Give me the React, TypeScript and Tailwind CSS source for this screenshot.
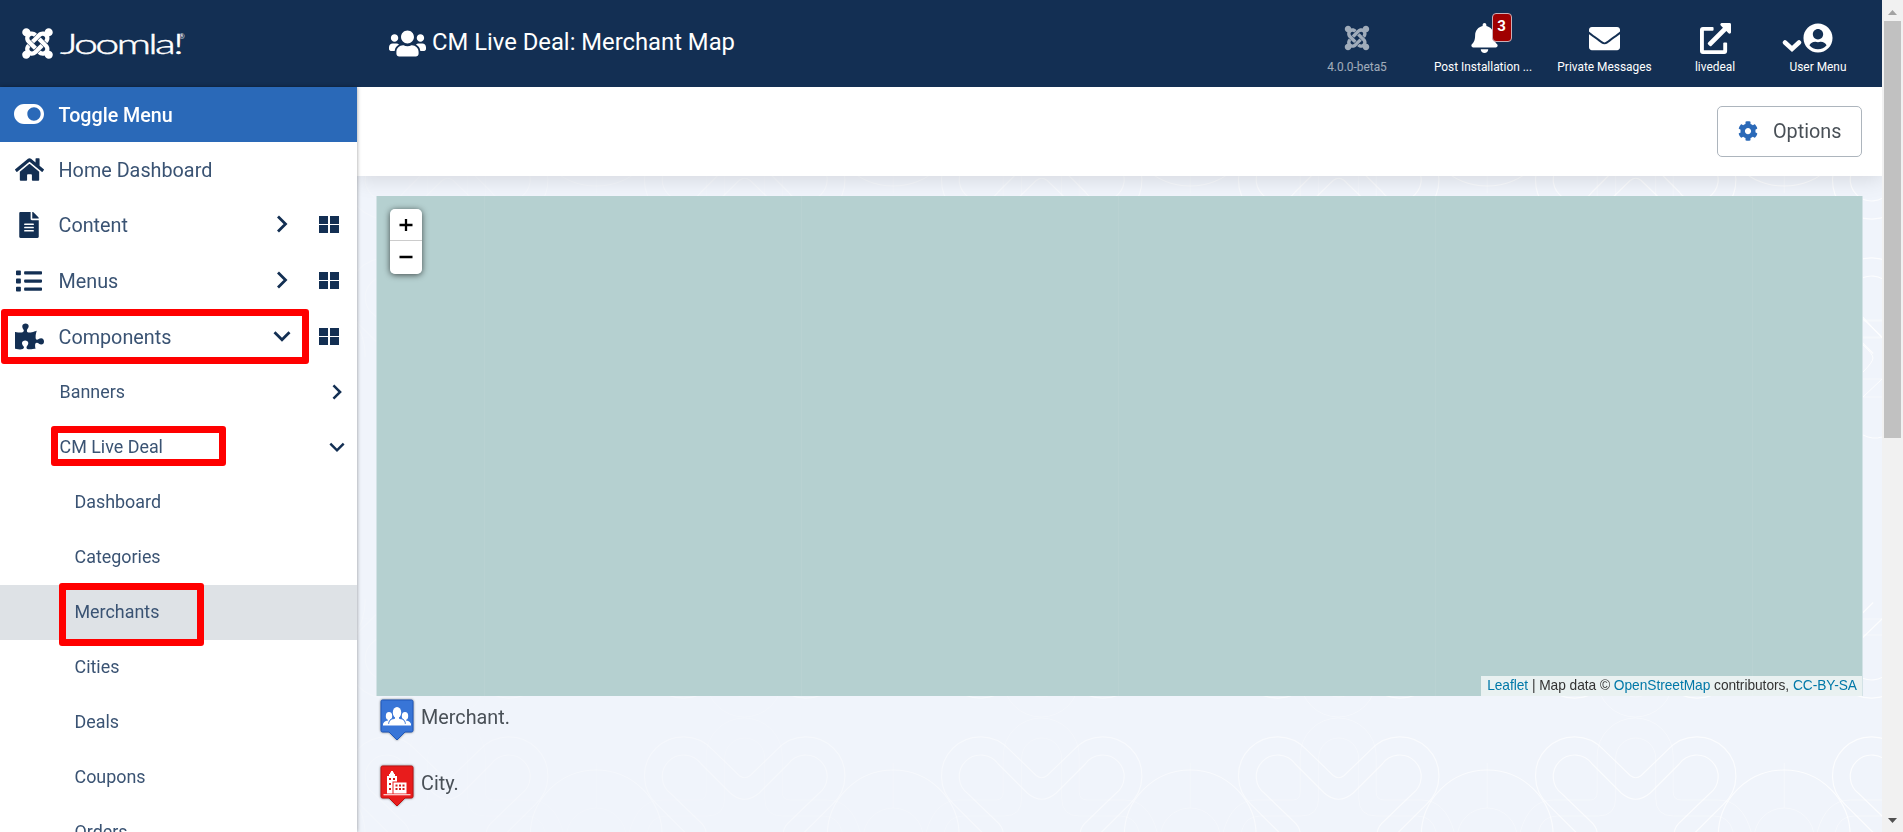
import type { ReactNode } from 'react';
import {
  FaBell, FaCog, FaEnvelope, FaExternalLinkAlt, FaFileAlt, FaHome, FaJoomla, FaList,
  FaPuzzlePiece, FaToggleOn, FaUserCircle, FaUsers,
} from 'react-icons/fa';

function Chevron({ down = false, className = 'h-[18px] w-[18px]' }: { down?: boolean; className?: string }) {
  return (
    <svg viewBox="0 0 18 18" className={className} fill="none" stroke="currentColor" strokeWidth="2.8">
      <path d={down ? 'M1.5 5.2 9 12.700l7.500-7.500' : 'M5 1.500 12.500 9 5 16.500'} />
    </svg>
  );
}

function Tiles() {
  return (
    <span className="grid h-[17px] w-5 grid-cols-2 gap-x-[2px] gap-y-[1px]">
      <span className="bg-[#132f53]" />
      <span className="bg-[#132f53]" />
      <span className="bg-[#132f53]" />
      <span className="bg-[#132f53]" />
    </span>
  );
}

function MainItem({ icon, label, arrow, tall = true }: { icon: ReactNode; label: string; arrow?: 'right' | 'down'; tall?: boolean }) {
  return (
    <li className={`flex items-center text-[#132f53] ${tall ? 'h-14' : 'h-[55px]'}`}>
      <span className="flex w-[58px] justify-center pb-px">{icon}</span>
      <span className="grow pl-[0.5px] pt-[2px] text-[19.8px] text-[#3a5373]">{label}</span>
      {arrow && (
        <>
          <span className="pb-[2px]"><Chevron down={arrow === 'down'} /></span>
          <span className="ml-[28px] mr-[18px] pb-[2px]"><Tiles /></span>
        </>
      )}
    </li>
  );
}

function SubItem({ label, arrow, deep, active }: { label: string; arrow?: 'right' | 'down'; deep?: boolean; active?: boolean }) {
  return (
    <li className={`flex h-[55px] shrink-0 items-center pr-3 text-[17.9px] text-[#3a5373] ${deep ? 'pl-[74.5px]' : 'pl-[59.5px]'} ${active ? 'bg-[#dee2e6]' : ''}`}>
      <span className="grow">{label}</span>
      {arrow && <span className="pb-[2px] text-[#132f53]"><Chevron down={arrow === 'down'} className="h-4 w-4" /></span>}
    </li>
  );
}

function Sidebar() {
  return (
    <aside className="relative z-10 h-[745px] w-[357px] shrink-0 overflow-hidden bg-white shadow-[0_0_4px_rgba(0,0,0,0.4)]">
      <div className="flex h-[55px] items-center bg-[#2a69b8] text-white">
        <span className="flex w-[58px] justify-center pb-px"><FaToggleOn className="h-[30px] w-[30px]" /></span>
        <span className="pl-[0.5px] pt-[2px] text-[19.7px] font-medium">Toggle Menu</span>
      </div>
      <ul>
        <MainItem icon={<FaHome className="h-[29px] w-[29px]" />} label="Home Dashboard" tall={false} />
        <MainItem icon={<FaFileAlt className="h-[26px] w-[20px]" />} label="Content" arrow="right" />
        <MainItem icon={<FaList className="h-[26px] w-[26px]" />} label="Menus" arrow="right" />
        <MainItem icon={<FaPuzzlePiece className="h-[29px] w-[29px]" />} label="Components" arrow="down" />
        <SubItem label="Banners" arrow="right" />
        <SubItem label="CM Live Deal" arrow="down" />
        <SubItem label="Dashboard" deep />
        <SubItem label="Categories" deep />
        <SubItem label="Merchants" deep active />
        <SubItem label="Cities" deep />
        <SubItem label="Deals" deep />
        <SubItem label="Coupons" deep />
        <SubItem label="Orders" deep />
      </ul>
    </aside>
  );
}

function HeaderItem({ icon, label, className }: { icon: ReactNode; label: string; className: string }) {
  return (
    <div className={`flex flex-col items-center ${className}`}>
      <span className="flex h-[36px] items-center justify-center">{icon}</span>
      <span className="mt-[2px] whitespace-nowrap text-[11.9px] leading-[18px]">{label}</span>
    </div>
  );
}

function Header() {
  return (
    <header className="flex h-[87px] bg-[#132f53] text-white">
      <div className="flex w-[389px] shrink-0 items-center pl-[20px]">
        <FaJoomla className="h-[35px] w-[35px]" />
        <svg className="ml-[4px] h-[40px] w-[130px]" viewBox="0 0 130 40">
          <text x="1" y="29.500" textLength="121" lengthAdjust="spacingAndGlyphs" letterSpacing="-1.8" fill="white" stroke="white" strokeWidth="0.4" fontSize="27" fontWeight="300" fontFamily="Lato, sans-serif">Joomla!</text>
          <text x="120" y="15" fill="white" fontSize="7" fontFamily="Lato, sans-serif">®</text>
        </svg>
      </div>
      <h1 className="flex h-[84px] grow items-center text-[23.8px]">
        <FaUsers className="mr-[6px] mt-[3px] h-[37px] w-[37px]" />
        <span className="pt-[2px]">CM Live Deal: Merchant Map</span>
      </h1>
      <div className="flex pt-[20px]">
        <HeaderItem className="w-[108px] opacity-60" icon={<FaJoomla className="mt-[-1px] h-[28px] w-[28px]" />} label="4.0.0-beta5" />
        <HeaderItem
          className="w-[142px] pl-[2px]"
          icon={
            <span className="relative left-[1px]">
              <FaBell className="h-[30px] w-[27px]" />
              <span className="absolute -top-[10px] left-[21px] flex h-[29px] w-5 items-center justify-center rounded border border-[#c9b0b8] bg-[#a00000] pb-[2px] text-[15px] font-bold">3</span>
            </span>
          }
          label="Post Installation ..."
        />
        <HeaderItem className="w-[103px]" icon={<FaEnvelope className="h-[31px] w-[31px]" />} label="Private Messages" />
        <HeaderItem className="w-[118px]" icon={<FaExternalLinkAlt className="h-[31px] w-[31px]" />} label="livedeal" />
        <HeaderItem
          className="w-[88px]"
          icon={
            <span className="relative">
              <svg viewBox="0 0 20 14" className="absolute -left-[21px] top-[16px] h-[14px] w-5" fill="none" stroke="white" strokeWidth="4.500" strokeLinecap="round">
                <path d="m3 3.500 7 6.500 7-6.500" />
              </svg>
              <FaUserCircle className="h-[30px] w-[30px]" />
            </span>
          }
          label="User Menu"
        />
        <div className="w-[20px]" />
      </div>
    </header>
  );
}

const COLUMNS = [-4, -3, -2, -1, 0, 1];
const BANDS = ['translate(0 738)', 'translate(0 697) scale(1 -1)', 'translate(0 259)', 'translate(0 218) scale(1 -1)'];

/** Faint line art behind the content area. */
function Backdrop() {
  return (
    <svg viewBox="357 87 1525 745" className="absolute inset-0 h-full w-full" fill="none" stroke="white">
      <defs>
        <linearGradient id="fade" x1="0" x2="1" y1="0" y2="0">
          <stop offset="0" stopColor="white" stopOpacity="0.25" />
          <stop offset="1" stopColor="white" stopOpacity="1" />
        </linearGradient>
        <mask id="fade-mask" maskUnits="userSpaceOnUse" x="357" y="87" width="1525" height="745">
          <rect x="357" y="87" width="1525" height="745" fill="url(#fade)" stroke="none" />
        </mask>
        <g id="motif">
          <g opacity="0.8" strokeWidth="1.200">
            <path d="M89 94.500 61 66.600A39 39 0 1 1 116 11.400L143 37.500Q148.500 42 154 37.500L181 11.400A39 39 0 1 1 236 66.600L208 94.500" />
            <path d="M110 94.500Q109 88 103 83L75 56A21.500 21.500 0 1 1 105 26L134 55Q148.500 67.500 163 55L192 26A21.500 21.500 0 1 1 222 56L194 83Q188 88 187 94.500" />
            <path d="M-66 98a66 66 0 0 1 132 0" />
          </g>
          <g opacity="0.4">
            <path d="M0 25v45M-30 100a30 30 0 0 1 60 0" />
            <path d="M33 94Q42 62 66 62H103Q110 62 110 54V18A38 38 0 0 1 186 18V54Q186 62 194 62H231Q255 62 264 94" />
            <path d="M51 94Q55 78 70 78H111Q128.500 78 128.500 60V20A20 20 0 0 1 168.500 20V60Q168.500 78 186 78H227Q242 78 246 94" />
          </g>
        </g>
      </defs>
      <g mask="url(#fade-mask)">
        {BANDS.map((band) => (
          <g key={band} transform={band}>
            {COLUMNS.map((c) => (
              <use key={c} href="#motif" x={1487.2 + c * 297} />
            ))}
          </g>
        ))}
        <path opacity="0.8" d="M1863 317 1882 338M1863 345q10 9 10 13t-10 14M1882 379l-19 18M1863 435q10 5 19 2" />
        <path opacity="0.4" d="M1863 320h19M1863 338h19M1863 379h19M1863 397h19" />
      </g>
    </svg>
  );
}

function MerchantPin() {
  return (
    <svg viewBox="0 0 34 42" className="h-[42px] w-[34px] drop-shadow-[0_0_1px_rgba(0,0,0,0.5)]">
      <path d="M2.500 1h29q1.500 0 1.500 1.500v29q0 1.500-1.500 1.500H25l-8 8-8-8H2.500Q1 33 1 31.500v-29Q1 1 2.500 1z" fill="#3875d7" stroke="#1e57b8" />
      <g fill="white">
        <ellipse cx="9" cy="17" rx="3.200" ry="4" /><ellipse cx="25" cy="17" rx="3.200" ry="4" />
        <path d="M3 26q0-4 5-4.500V19h2v7zM31 26q0-4-5-4.500V19h-2v7z" />
        <path d="M8.500 26q0-6.500 6-6.500V16h5v3.500q6 0 6 6.500z" stroke="#3875d7" strokeWidth="1" />
        <ellipse cx="17" cy="13.500" rx="4.200" ry="5.500" />
        <path d="M3 24.800h28v1.700H3z" />
      </g>
    </svg>
  );
}

function CityPin() {
  return (
    <svg viewBox="0 0 34 42" className="h-[42px] w-[34px] drop-shadow-[0_0_1px_rgba(0,0,0,0.5)]">
      <path d="M2.500 1h29q1.500 0 1.500 1.500v29q0 1.500-1.500 1.500H25l-8 8-8-8H2.500Q1 33 1 31.500v-29Q1 1 2.500 1z" fill="#e81c1c" stroke="#bd1010" />
      <path d="M3.500 29.300h27v1h-27zM7 28.500V11h2V9h1V7.500h1V6h2v1.500h1V9h1v2h2v5.500h-4.500v12zM13.500 17.500H26.500v11h-13z" fill="white" />
      <path d="M9 13h2v2H9zm4 0h2v2h-2zM9 18h2v2H9zm0 5h2v2H9zM15.500 19.500h2v2h-2zm3.500 0h2v2h-2zm3.500 0h2v2h-2zM15.500 23h2v2h-2zm3.500 0h2v2h-2zm3.500 0h2v2h-2z" fill="#d31919" />
    </svg>
  );
}

function MapPanel() {
  return (
    <div className="relative flex h-[500px] w-[1487px] border-x border-[#d3e2e6] bg-[#b5d0d0] font-['Liberation_Sans',sans-serif]">
      <div className="w-[108px] border-r border-white/6" />
      <div className="w-[317px] border-r border-white/6" />
      <div className="w-[317px] border-r border-white/6" />
      <div className="w-[317px] border-r border-white/6" />
      <div className="w-[317px] border-r border-white/6" />
      <div className="absolute left-[12.500px] top-[13px] w-8 overflow-hidden rounded-[5px] shadow-[0_1px_6px_rgba(0,0,0,0.65)]">
        <button className="flex h-8 w-full items-center justify-center border-b border-[#ccc] bg-white">
          <svg viewBox="0 0 14 14" className="h-[14px] w-[14px]" stroke="black" strokeWidth="2.300"><path d="M.5 7h13M7 1v12" /></svg>
        </button>
        <button className="flex h-[33px] w-full items-center justify-center bg-white pb-[2px]">
          <svg viewBox="0 0 14 14" className="h-[14px] w-[14px]" stroke="black" strokeWidth="2.300"><path d="M.5 7h13" /></svg>
        </button>
      </div>
      <div className="absolute bottom-0 right-0 flex h-5 items-center whitespace-pre bg-white/70 pl-[6px] pr-[5px] text-[13.750px] tracking-[-0.045px] text-[#333]">
        <span className="text-[#0078a8]">Leaflet</span> | Map data © <span className="text-[#0078a8]">OpenStreetMap</span> contributors, <span className="text-[#0078a8]">CC-BY-SA</span>
      </div>
    </div>
  );
}

function Content() {
  return (
    <main className="relative flex h-[745px] grow flex-col overflow-hidden bg-[#f0f4fb]">
      <Backdrop />
      <div className="relative flex h-[89px] shrink-0 items-center justify-end bg-white pr-5 shadow-[0_3px_20px_rgba(0,0,0,0.12)]">
        <button className="flex h-[51px] w-[145px] items-center rounded-[5px] border border-[#adb5bd] pl-[20px] text-[19.8px] text-[#495057]">
          <FaCog className="mb-[2px] mr-[15px] h-5 w-5 text-[#2a69b8]" />
          Options
        </button>
      </div>
      <div className="relative pl-[19px] pt-5">
        <MapPanel />
        <div className="flex flex-col gap-[24px] pl-[3.500px] pt-[3px] text-[19.8px] text-[#495057]">
          <p className="flex h-[42px] items-center gap-[7.500px]"><MerchantPin /><span className="pb-[4px]">Merchant.</span></p>
          <p className="flex h-[42px] items-center gap-[7.500px]"><CityPin /><span className="pb-[4px]">City.</span></p>
        </div>
      </div>
    </main>
  );
}

function Scrollbar() {
  return (
    <div className="flex h-[832px] w-[21px] shrink-0 flex-col items-center bg-[#f1f1f1]">
      <div className="flex h-[21px] items-center pt-1">
        <svg viewBox="0 0 9 5" className="h-[5px] w-[9px]" fill="#a3a3a3"><path d="M0 5 4.500 0 9 5z" /></svg>
      </div>
      <div className="h-[417px] w-[17px] bg-[#c1c1c1]" />
      <div className="flex grow items-end pb-[9px]">
        <svg viewBox="0 0 9 5" className="h-[5px] w-[9px]" fill="#505050"><path d="M0 0 4.500 5 9 0z" /></svg>
      </div>
    </div>
  );
}

export default function App() {
  return (
    <div className="relative flex h-[832px] w-[1903px] overflow-hidden font-[Roboto,sans-serif]">
      <div className="w-[1882px] shrink-0">
        <Header />
        <div className="flex">
          <Sidebar />
          <Content />
        </div>
      </div>
      <Scrollbar />
      <div className="absolute left-[1px] top-[309px] z-20 h-[55px] w-[308px] rounded-[3px] border-[7px] border-[#ff0000]" />
      <div className="absolute left-[51px] top-[426px] z-20 h-[40px] w-[175px] rounded-[3px] border-[7px] border-[#ff0000]" />
      <div className="absolute left-[59px] top-[583px] z-20 h-[63px] w-[145px] rounded-[3px] border-[7px] border-[#ff0000]" />
    </div>
  );
}
